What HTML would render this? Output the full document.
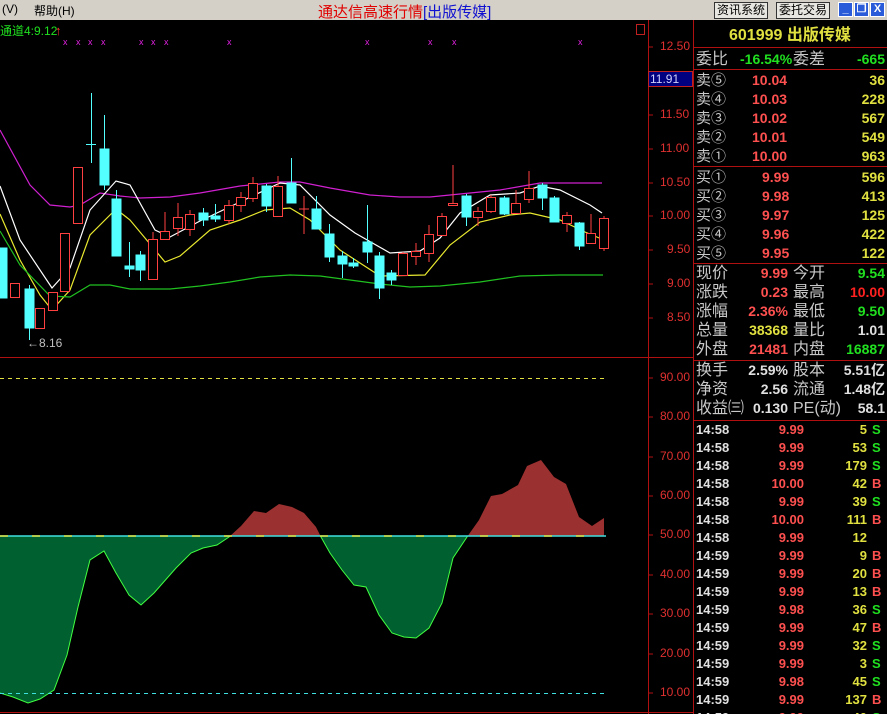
<!DOCTYPE html>
<html style="width:887px;height:714px;overflow:hidden"><head><meta charset="utf-8"><style>
*{margin:0;padding:0;box-sizing:border-box}
body{width:887px;height:714px;background:#000;position:relative;overflow:hidden;font-family:"Liberation Sans","Noto Sans CJK SC",sans-serif}
#top{position:absolute;left:0;top:0;width:887px;height:20px;background:#d4d0c8;font-size:12px}
.btn{position:absolute;top:2px;height:17px;border:1px solid #333;background:#e8e6e0;font-size:12px;line-height:15px;padding:0 2px}
.wb{position:absolute;top:2px;width:15px;height:15px;background:#2a5bd8;border:1px solid #fff;color:#fff;font-size:11px;text-align:center;line-height:13px;font-weight:bold}
.r{position:absolute;font-size:14px;white-space:nowrap;line-height:19px}
.l{color:#c8c8c8}
.n{font-weight:bold}
.red{color:#ff5050}.yel{color:#e0e040}.grn{color:#20e020}.wht{color:#e0e0e0}
.hl{position:absolute;left:693px;width:194px;height:1px;background:#b01010}
.ax{position:absolute;font-size:12px;color:#e03030;left:660px}
</style></head><body>
<div id="top">
<span style="position:absolute;left:2px;top:2px">(V)</span>
<span style="position:absolute;left:34px;top:2px">帮助(H)</span>
<span style="position:absolute;left:318px;top:1px;font-size:15px;color:#e00000">通达信高速行情<span style="color:#1010d0">[出版传媒]</span></span>
<div class="btn" style="left:714px">资讯系统</div>
<div class="btn" style="left:776px">委托交易</div>
<div class="wb" style="left:838px">_</div><div class="wb" style="left:854px">❐</div><div class="wb" style="left:870px">X</div>
</div>

<svg width="887" height="714" style="position:absolute;left:0;top:0">
<defs>
<clipPath id="up"><rect x="0" y="0" width="640" height="536"/></clipPath>
<clipPath id="dn"><rect x="0" y="536" width="640" height="200"/></clipPath>
</defs>
<line x1="648.5" y1="20" x2="648.5" y2="714" stroke="#b01010"/>
<line x1="693.5" y1="20" x2="693.5" y2="714" stroke="#b01010"/>
<line x1="0" y1="357.5" x2="693" y2="357.5" stroke="#b01010"/>
<line x1="0" y1="712.5" x2="693" y2="712.5" stroke="#b01010"/>
<rect x="636.5" y="24.5" width="8" height="10" fill="none" stroke="#c02020"/>
<rect x="648.5" y="71.5" width="44" height="15" fill="#000080" stroke="#c02020"/>
<g stroke="#b01010">
<line x1="648" y1="47" x2="653" y2="47"/><line x1="648" y1="115" x2="653" y2="115"/><line x1="648" y1="149" x2="653" y2="149"/><line x1="648" y1="183" x2="653" y2="183"/><line x1="648" y1="216" x2="653" y2="216"/><line x1="648" y1="250" x2="653" y2="250"/><line x1="648" y1="284" x2="653" y2="284"/><line x1="648" y1="318" x2="653" y2="318"/>
<line x1="648" y1="378" x2="653" y2="378"/><line x1="648" y1="417" x2="653" y2="417"/><line x1="648" y1="457" x2="653" y2="457"/><line x1="648" y1="496" x2="653" y2="496"/><line x1="648" y1="535" x2="653" y2="535"/><line x1="648" y1="575" x2="653" y2="575"/><line x1="648" y1="614" x2="653" y2="614"/><line x1="648" y1="654" x2="653" y2="654"/><line x1="648" y1="693" x2="653" y2="693"/>
</g>
<text x="0" y="35" fill="#20e020" font-size="12" font-family="Liberation Sans">通道4:9.12</text>
<text x="55" y="35" fill="#ff3030" font-size="13">↑</text>
<g fill="#e020e0" font-size="9" font-family="Liberation Sans">
<text x="63" y="45">x</text><text x="76" y="45">x</text><text x="88" y="45">x</text><text x="101" y="45">x</text><text x="139" y="45">x</text><text x="151" y="45">x</text><text x="164" y="45">x</text><text x="227" y="45">x</text><text x="365" y="45">x</text><text x="428" y="45">x</text><text x="452" y="45">x</text><text x="578" y="45">x</text>
</g>
<text x="27" y="347" fill="#c0c0c0" font-size="12" font-family="Liberation Sans">←8.16</text>

<g fill="none" stroke-width="1.2">
<polyline stroke="#d020d0" points="0,130 30,185 50,205 70,207 80,205 100,193 120,196 140,198 170,197 200,193 240,186 280,182 300,182 330,188 370,195 400,197 430,197 460,194 500,190 540,183 602,183"/>
<polyline stroke="#ffffff" points="0,186 20,240 52,288 70,268 90,210 116,181 130,185 155,230 170,237 200,221 240,202 280,183 300,185 330,215 355,233 390,253 420,251 440,238 460,213 490,195 520,193 540,186 560,190 590,205 602,213"/>
<polyline stroke="#e8e830" points="0,214 20,260 40,295 52,310 70,290 90,235 116,209 130,220 165,262 180,256 210,230 240,220 265,210 290,208 310,220 340,250 380,276 425,275 450,245 480,222 510,215 530,213 560,220 585,232 604,240"/>
<polyline stroke="#20c020" points="0,231 20,265 50,296 70,297 90,285 110,285 130,289 170,289 200,286 230,282 260,277 290,275 320,276 350,280 380,284 410,287 440,286 480,282 520,276 560,275 603,275"/>
</g>

<g stroke-width="1">
<g fill="#54ffff" stroke="#54ffff">
<rect x="-2" y="248" width="9" height="50"/>
<line x1="29.5" y1="285" x2="29.5" y2="340"/><rect x="25" y="289" width="9" height="39"/>
<line x1="91.5" y1="93" x2="91.5" y2="163"/><line x1="86" y1="144.5" x2="96" y2="144.5"/>
<line x1="104.5" y1="115" x2="104.5" y2="190"/><rect x="100" y="149" width="9" height="36"/>
<line x1="116.5" y1="190" x2="116.5" y2="256"/><rect x="112" y="199" width="9" height="57"/>
<line x1="129.5" y1="242" x2="129.5" y2="277"/><rect x="125" y="266" width="9" height="3"/>
<line x1="140.5" y1="251" x2="140.5" y2="281"/><rect x="136" y="255" width="9" height="15"/>
<line x1="203.5" y1="208" x2="203.5" y2="226"/><rect x="199" y="213" width="9" height="7"/>
<line x1="215.5" y1="204" x2="215.5" y2="222"/><rect x="211" y="216" width="9" height="3"/>
<line x1="266.5" y1="184" x2="266.5" y2="212"/><rect x="262" y="186" width="9" height="20"/>
<line x1="291.5" y1="158" x2="291.5" y2="203"/><rect x="287" y="183" width="9" height="20"/>
<line x1="316.5" y1="196" x2="316.5" y2="229"/><rect x="312" y="209" width="9" height="20"/>
<line x1="329.5" y1="224" x2="329.5" y2="262"/><rect x="325" y="234" width="9" height="23"/>
<line x1="342.5" y1="251" x2="342.5" y2="278"/><rect x="338" y="256" width="9" height="8"/>
<line x1="353.5" y1="258" x2="353.5" y2="268"/><rect x="349" y="263" width="9" height="3"/>
<line x1="367.5" y1="205" x2="367.5" y2="263"/><rect x="363" y="242" width="9" height="10"/>
<line x1="379.5" y1="252" x2="379.5" y2="299"/><rect x="375" y="256" width="9" height="32"/>
<line x1="391.5" y1="270" x2="391.5" y2="285"/><rect x="387" y="273" width="9" height="7"/>
<line x1="466.5" y1="194" x2="466.5" y2="226"/><rect x="462" y="196" width="9" height="21"/>
<line x1="504.5" y1="196" x2="504.5" y2="215"/><rect x="500" y="198" width="9" height="16"/>
<line x1="542.5" y1="183" x2="542.5" y2="210"/><rect x="538" y="185" width="9" height="13"/>
<line x1="554.5" y1="196" x2="554.5" y2="222"/><rect x="550" y="198" width="9" height="24"/>
<line x1="579.5" y1="222" x2="579.5" y2="250"/><rect x="575" y="223" width="9" height="23"/>
</g>
<g fill="#000" stroke="#ff4040">
<rect x="10.5" y="283.5" width="9" height="14"/>
<rect x="35.5" y="308.5" width="9" height="20"/>
<rect x="48.5" y="292.5" width="9" height="18"/>
<rect x="60.5" y="233.5" width="9" height="58"/>
<rect x="73.5" y="167.5" width="9" height="56"/>
<line x1="153" y1="232" x2="153" y2="239"/><rect x="148.5" y="239.5" width="9" height="40"/>
<line x1="165" y1="212" x2="165" y2="231"/><rect x="160.5" y="231.5" width="9" height="8"/>
<line x1="178" y1="203" x2="178" y2="236"/><rect x="173.5" y="217.5" width="9" height="11"/>
<line x1="190" y1="210" x2="190" y2="236"/><rect x="185.5" y="214.5" width="9" height="15"/>
<line x1="229" y1="200" x2="229" y2="224"/><rect x="224.5" y="205.5" width="9" height="15"/>
<line x1="241" y1="192" x2="241" y2="212"/><rect x="236.5" y="197.5" width="9" height="8"/>
<line x1="253" y1="177" x2="253" y2="202"/><rect x="248.5" y="183.5" width="9" height="15"/>
<line x1="278" y1="176" x2="278" y2="216"/><rect x="273.5" y="186.5" width="9" height="30"/>
<line x1="304" y1="196" x2="304" y2="234"/><line x1="299" y1="209" x2="309" y2="209"/>
<line x1="403" y1="252" x2="403" y2="275"/><rect x="398.5" y="253.5" width="9" height="22"/>
<line x1="416" y1="243" x2="416" y2="265"/><rect x="411.5" y="251.5" width="9" height="5"/>
<line x1="429" y1="225" x2="429" y2="262"/><rect x="424.5" y="234.5" width="9" height="19"/>
<line x1="442" y1="213" x2="442" y2="236"/><rect x="437.5" y="216.5" width="9" height="19"/>
<line x1="453" y1="165" x2="453" y2="204"/><rect x="448.5" y="203.5" width="9" height="2"/>
<line x1="478" y1="207" x2="478" y2="226"/><rect x="473.5" y="211.5" width="9" height="6"/>
<line x1="491" y1="195" x2="491" y2="213"/><rect x="486.5" y="197.5" width="9" height="14"/>
<line x1="516" y1="190" x2="516" y2="214"/><rect x="511.5" y="203.5" width="9" height="10"/>
<line x1="529" y1="171" x2="529" y2="203"/><rect x="524.5" y="188.5" width="9" height="11"/>
<line x1="567" y1="212" x2="567" y2="232"/><rect x="562.5" y="215.5" width="9" height="8"/>
<line x1="591" y1="214" x2="591" y2="244"/><rect x="586.5" y="233.5" width="9" height="10"/>
<line x1="604" y1="216" x2="604" y2="251"/><rect x="599.5" y="218.5" width="9" height="30"/>
</g>
</g>

<g>
<polygon clip-path="url(#up)" fill="#9b3030" points="0,536 0,693 13,697 28,703 40,699 54,690 67,655 78,607 90,560 104,551 116,573 129,595 141,605 154,593 176,568 191,553 203,548 217,545 229,537 241,526 254,511 266,513 279,504 292,507 304,513 316,527 321,537 330,553 342,570 354,585 366,587 379,615 392,633 404,637 416,638 429,628 442,603 453,558 467,537 479,520 491,496 502,494 518,485 527,466 541,460 554,477 566,484 579,517 592,526 604,518 604,536"/>
<polygon clip-path="url(#dn)" fill="#006030" points="0,536 0,693 13,697 28,703 40,699 54,690 67,655 78,607 90,560 104,551 116,573 129,595 141,605 154,593 176,568 191,553 203,548 217,545 229,537 241,526 254,511 266,513 279,504 292,507 304,513 316,527 321,537 330,553 342,570 354,585 366,587 379,615 392,633 404,637 416,638 429,628 442,603 453,558 467,537 479,520 491,496 502,494 518,485 527,466 541,460 554,477 566,484 579,517 592,526 604,518 604,536"/>
<polyline clip-path="url(#dn)" fill="none" stroke="#40ff40" points="0,693 13,697 28,703 40,699 54,690 67,655 78,607 90,560 104,551 116,573 129,595 141,605 154,593 176,568 191,553 203,548 217,545 229,537 241,526 254,511 266,513 279,504 292,507 304,513 316,527 321,537 330,553 342,570 354,585 366,587 379,615 392,633 404,637 416,638 429,628 442,603 453,558 467,537 479,520 491,496 502,494 518,485 527,466 541,460 554,477 566,484 579,517 592,526 604,518"/>
</g>
<line x1="0" y1="378.5" x2="606" y2="378.5" stroke="#e0e040" stroke-dasharray="4,4"/>
<line x1="0" y1="536" x2="606" y2="536" stroke="#40e0e0" stroke-width="1.5"/>
<line x1="0" y1="536" x2="606" y2="536" stroke="#e0e040" stroke-width="1.5" stroke-dasharray="8,24"/>
<line x1="0" y1="693.5" x2="606" y2="693.5" stroke="#40e0e0" stroke-dasharray="4,4"/>
</svg>

<div class="ax" style="top:39px">12.50</div>
<div class="ax" style="top:72px;left:650px;color:#d0d0ff">11.91</div>
<div class="ax" style="top:107px">11.50</div>
<div class="ax" style="top:141px">11.00</div>
<div class="ax" style="top:175px">10.50</div>
<div class="ax" style="top:208px">10.00</div>
<div class="ax" style="top:242px;left:667px">9.50</div>
<div class="ax" style="top:276px;left:667px">9.00</div>
<div class="ax" style="top:310px;left:667px">8.50</div>
<div class="ax" style="top:370px">90.00</div>
<div class="ax" style="top:409px">80.00</div>
<div class="ax" style="top:449px">70.00</div>
<div class="ax" style="top:488px">60.00</div>
<div class="ax" style="top:527px">50.00</div>
<div class="ax" style="top:567px">40.00</div>
<div class="ax" style="top:606px">30.00</div>
<div class="ax" style="top:646px">20.00</div>
<div class="ax" style="top:685px">10.00</div>

<div class="r n yel" style="left:729px;top:26px;font-size:16px">601999 出版传媒</div>
<div class="hl" style="top:47px"></div>
<div class="r l" style="left:696px;top:50px;font-size:16px">委比</div>
<div class="r n grn" style="left:740px;top:50px">-16.54%</div>
<div class="r l" style="left:793px;top:50px;font-size:16px">委差</div>
<div class="r n grn" style="right:2px;top:50px">-665</div>
<div class="hl" style="top:69px"></div>

<div class="r l" style="left:696px;top:71px;font-size:15px">卖⑤<br>卖④<br>卖③<br>卖②<br>卖①</div>
<div class="r n red" style="left:752px;top:71px">10.04<br>10.03<br>10.02<br>10.01<br>10.00</div>
<div class="r n yel" style="right:2px;top:71px;text-align:right">36<br>228<br>567<br>549<br>963</div>
<div class="hl" style="top:166px"></div>
<div class="r l" style="left:696px;top:168px;font-size:15px">买①<br>买②<br>买③<br>买④<br>买⑤</div>
<div class="r n red" style="left:762px;top:168px">9.99<br>9.98<br>9.97<br>9.96<br>9.95</div>
<div class="r n yel" style="right:2px;top:168px;text-align:right">596<br>413<br>125<br>422<br>122</div>
<div class="hl" style="top:263px"></div>
<div class="r l" style="left:696px;top:264px;font-size:16px">现价<br>涨跌<br>涨幅<br>总量<br>外盘</div>
<div class="r n" style="left:740px;top:264px;text-align:right;width:48px"><span class="red">9.99</span><br><span class="red">0.23</span><br><span style="color:#ff5050">2.36%</span><br><span class="yel">38368</span><br><span class="red">21481</span></div>
<div class="r l" style="left:793px;top:264px;font-size:16px">今开<br>最高<br>最低<br>量比<br>内盘</div>
<div class="r n" style="right:2px;top:264px;text-align:right"><span class="grn">9.54</span><br><span style="color:#ff2020">10.00</span><br><span class="grn">9.50</span><br><span class="wht">1.01</span><br><span class="grn">16887</span></div>
<div class="hl" style="top:360px"></div>
<div class="r l" style="left:696px;top:361px;font-size:16px">换手<br>净资<br>收益㈢</div>
<div class="r n wht" style="left:740px;top:361px;text-align:right;width:48px">2.59%<br>2.56<br>0.130</div>
<div class="r l" style="left:793px;top:361px;font-size:16px">股本<br>流通<br>PE(动)</div>
<div class="r n wht" style="right:2px;top:361px;text-align:right">5.51亿<br>1.48亿<br>58.1</div>
<div class="hl" style="top:420px"></div>
<div class="r n wht" style="left:696px;top:421px;line-height:18px;font-size:13px">14:58<br>14:58<br>14:58<br>14:58<br>14:58<br>14:58<br>14:58<br>14:59<br>14:59<br>14:59<br>14:59<br>14:59<br>14:59<br>14:59<br>14:59<br>14:59<br>14:59</div>
<div class="r n red" style="left:748px;top:421px;width:56px;text-align:right;line-height:18px;font-size:13px">9.99<br>9.99<br>9.99<br>10.00<br>9.99<br>10.00<br>9.99<br>9.99<br>9.99<br>9.99<br>9.98<br>9.99<br>9.99<br>9.99<br>9.98<br>9.99<br>9.99</div>
<div class="r n yel" style="left:830px;top:421px;width:37px;text-align:right;line-height:18px;font-size:13px">5<br>53<br>179<br>42<br>39<br>111<br>12<br>9<br>20<br>13<br>36<br>47<br>32<br>3<br>45<br>137<br>40</div>
<div class="r n" style="left:872px;top:421px;line-height:18px;font-size:13px"><span class="grn">S</span><br><span class="grn">S</span><br><span class="grn">S</span><br><span class="red">B</span><br><span class="grn">S</span><br><span class="red">B</span><br>&nbsp;<br><span class="red">B</span><br><span class="red">B</span><br><span class="red">B</span><br><span class="grn">S</span><br><span class="red">B</span><br><span class="grn">S</span><br><span class="grn">S</span><br><span class="grn">S</span><br><span class="red">B</span><br><span class="grn">S</span></div>
</body></html>
